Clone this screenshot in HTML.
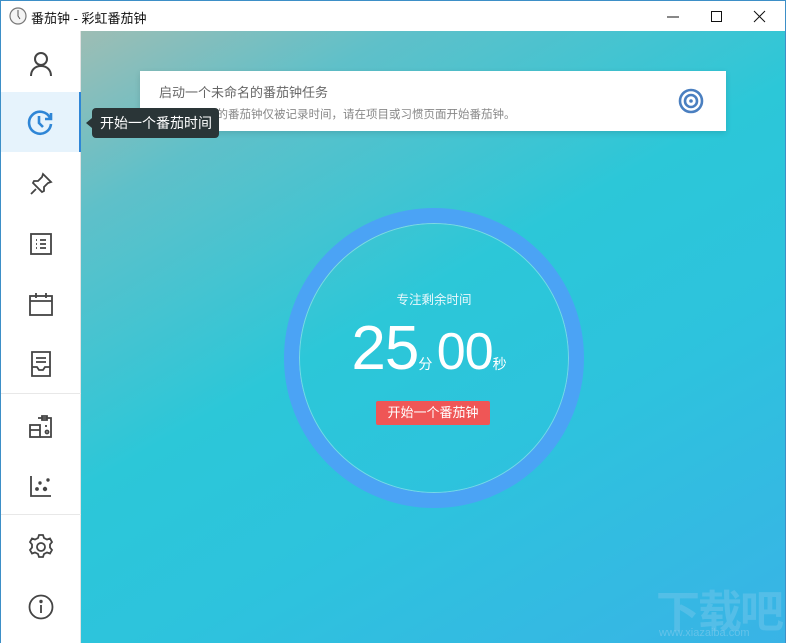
<!DOCTYPE html>
<html><head><meta charset="utf-8"><style>
*{margin:0;padding:0;box-sizing:border-box}
html,body{width:786px;height:643px;overflow:hidden}
body{font-family:"Liberation Sans","Noto Sans CJK SC",sans-serif;position:relative;background:#fff}
.title{position:absolute;left:0;top:0;width:786px;height:31px;background:#fff;border:1px solid #3d8fc7;border-bottom:none}
.title .t{position:absolute;left:30px;top:7px;font-size:13px;color:#111}
.side{position:absolute;left:0;top:31px;width:81px;height:612px;background:#fff;border-left:1px solid #3d8fc7;border-right:1px solid #e2e2e2}
.item{position:absolute;left:0;width:80px;height:60px;display:flex;align-items:center;justify-content:center}
.main{position:absolute;left:81px;top:31px;width:705px;height:612px;overflow:hidden;background:linear-gradient(150deg,#9ebdb4 0%,#5fc0c9 18%,#2cc7d8 45%,#2dc3dd 65%,#39b3e6 100%);border-right:1px solid #3d8fc7}
svg{display:block}
</style></head><body>
<div class="title">
<svg style="position:absolute;left:8px;top:6px" width="18" height="18" viewBox="0 0 18 18"><circle cx="9" cy="9" r="8" fill="#f4f4f4" stroke="#777" stroke-width="1.2"/><path d="M9 3v6l2 3" stroke="#555" stroke-width="1" fill="none"/></svg>
<div class="t">番茄钟 - 彩虹番茄钟</div>
<svg style="position:absolute;left:666px;top:8px" width="100" height="16" viewBox="0 0 100 16"><path d="M0 8h12" stroke="#111" stroke-width="1"/><rect x="44.5" y="2.5" width="10" height="10" fill="none" stroke="#111"/><path d="M87 2l11 11M98 2L87 13" stroke="#111"/></svg>
</div>
<div class="side">
<div class="item" style="top:3px"><svg width="24" height="26" viewBox="0 0 24 26" fill="none" stroke="#444" stroke-width="2"><circle cx="12" cy="8" r="6"/><path d="M2 25c0-6 4-10 10-10s10 4 10 10"/></svg></div>
<div class="item" style="top:61px;background:#e6f3fc;border-right:2px solid #2f86d6"><svg width="28" height="28" viewBox="0 0 28 28" fill="none" stroke="#2f86d6" stroke-width="2.6"><path d="M24 10A11 11 0 1 0 25 16"/><path d="M25 5v6h-6"/><path d="M13 8v7l4 4"/></svg></div>
<div class="item" style="top:123px"><svg width="24" height="24" viewBox="0 0 24 24" fill="none" stroke="#444" stroke-width="1.8"><path d="M14 2l8 8-3 1-4 4 0 4-2 1-9-9 1-2h4l4-4z"/><path d="M7 17l-5 5"/></svg></div>
<div class="item" style="top:183px"><svg width="22" height="22" viewBox="0 0 22 22" fill="none" stroke="#444" stroke-width="1.8"><rect x="1" y="1" width="20" height="20"/><path d="M6 7h1M6 11h1M6 15h1M10 7h6M10 11h6M10 15h6"/></svg></div>
<div class="item" style="top:243px"><svg width="24" height="24" viewBox="0 0 24 24" fill="none" stroke="#444" stroke-width="1.8"><rect x="1" y="4" width="22" height="19"/><path d="M1 9h22M7 1v5M17 1v5"/></svg></div>
<div class="item" style="top:303px"><svg width="22" height="26" viewBox="0 0 22 26" fill="none" stroke="#444" stroke-width="1.8"><path d="M2 1h18v24H2z"/><path d="M6 7h10M6 11h10M2 16h5l2 3h4l2-3h5"/></svg></div>
<div style="position:absolute;left:0;top:362px;width:80px;height:1px;background:#e8e8e8"></div>
<div class="item" style="top:365px"><svg width="24" height="26" viewBox="0 0 24 26" fill="none" stroke="#444" stroke-width="1.8"><rect x="1" y="12" width="10" height="12"/><path d="M1 17h10M9 5h13v19H11M13 3h5v4h-5z"/><circle cx="18" cy="19" r="1.5"/><path d="M16 13h2"/></svg></div>
<div class="item" style="top:425px"><svg width="24" height="24" viewBox="0 0 24 24" fill="none" stroke="#444" stroke-width="1.8"><path d="M2 2v20h20"/><circle cx="8" cy="15" r="1" fill="#444"/><circle cx="11" cy="9" r="0.8" fill="#444"/><circle cx="16" cy="15" r="1.3" fill="#444"/><circle cx="19" cy="6" r="0.8" fill="#444"/></svg></div>
<div style="position:absolute;left:0;top:483px;width:80px;height:1px;background:#e8e8e8"></div>
<div class="item" style="top:486px"><svg width="26" height="26" viewBox="0 0 26 26" fill="none" stroke="#444" stroke-width="1.8"><path d="M11 1h4l1 3 3 1.5 3-1 2 3.5-2 2.5v3l2 2.5-2 3.5-3-1-3 1.5-1 3h-4l-1-3-3-1.5-3 1-2-3.5 2-2.5v-3l-2-2.5 2-3.5 3 1 3-1.5z"/><circle cx="13" cy="13" r="4"/></svg></div>
<div class="item" style="top:546px"><svg width="26" height="26" viewBox="0 0 26 26" fill="none" stroke="#444" stroke-width="1.8"><circle cx="13" cy="13" r="11.5"/><path d="M13 11v8"/><circle cx="13" cy="7.5" r="0.8" fill="#444"/></svg></div>
</div>
<div class="main">
<div style="position:absolute;left:59px;top:40px;width:586px;height:60px;background:#fff;box-shadow:0 2px 6px rgba(0,0,0,.12)">
<div style="position:absolute;left:19px;top:11px;font-size:13px;color:#666">启动一个未命名的番茄钟任务</div>
<div style="position:absolute;left:19px;top:35px;font-size:11.5px;color:#888">在此处启动的番茄钟仅被记录时间，请在项目或习惯页面开始番茄钟。</div>
<svg style="position:absolute;left:538px;top:17px" width="26" height="26" viewBox="0 0 26 26" fill="none" stroke="#4a7fc0" stroke-width="2.6"><circle cx="13" cy="13" r="11"/><circle cx="13" cy="13" r="6"/><circle cx="13" cy="13" r="1.8" fill="#4a7fc0" stroke="none"/></svg>
</div>
<div style="position:absolute;left:203px;top:177px;width:300px;height:300px;border-radius:50%;border:15px solid #4ba3f5;box-shadow:inset 0 0 0 1px rgba(255,255,255,.35)"></div>
<div style="position:absolute;left:203px;top:258px;width:300px;text-align:center;color:#eaf8fc;font-size:12.5px">专注剩余时间</div>
<div style="position:absolute;left:198px;top:282px;width:300px;text-align:center;color:#fff;white-space:nowrap"><span style="font-size:62px;font-weight:300;letter-spacing:-1px">25</span><span style="font-size:14px">分</span> <span style="font-size:52px;font-weight:300;letter-spacing:-1px">00</span><span style="font-size:14px">秒</span></div>
<div style="position:absolute;left:295px;top:370px;width:114px;height:24px;background:#ef5656;border-radius:2px;color:#fff;font-size:13px;text-align:center;line-height:24px">开始一个番茄钟</div>
<div style="position:absolute;left:575px;top:545px;font-size:44px;font-weight:bold;color:rgba(120,200,235,.45);white-space:nowrap;letter-spacing:-2px">下载吧</div>
<div style="position:absolute;left:578px;top:596px;font-size:11px;color:rgba(120,200,235,.7);white-space:nowrap">www.xiazaiba.com</div>
</div>
<div style="position:absolute;left:92px;top:108px;width:127px;height:30px;background:#2a3537;border-radius:4px;color:#fff;font-size:14px;line-height:30px;padding-left:8px">开始一个番茄时间</div>
<div style="position:absolute;left:86px;top:118px;width:0;height:0;border-top:5px solid transparent;border-bottom:5px solid transparent;border-right:6px solid #2a3537"></div>
</body></html>
